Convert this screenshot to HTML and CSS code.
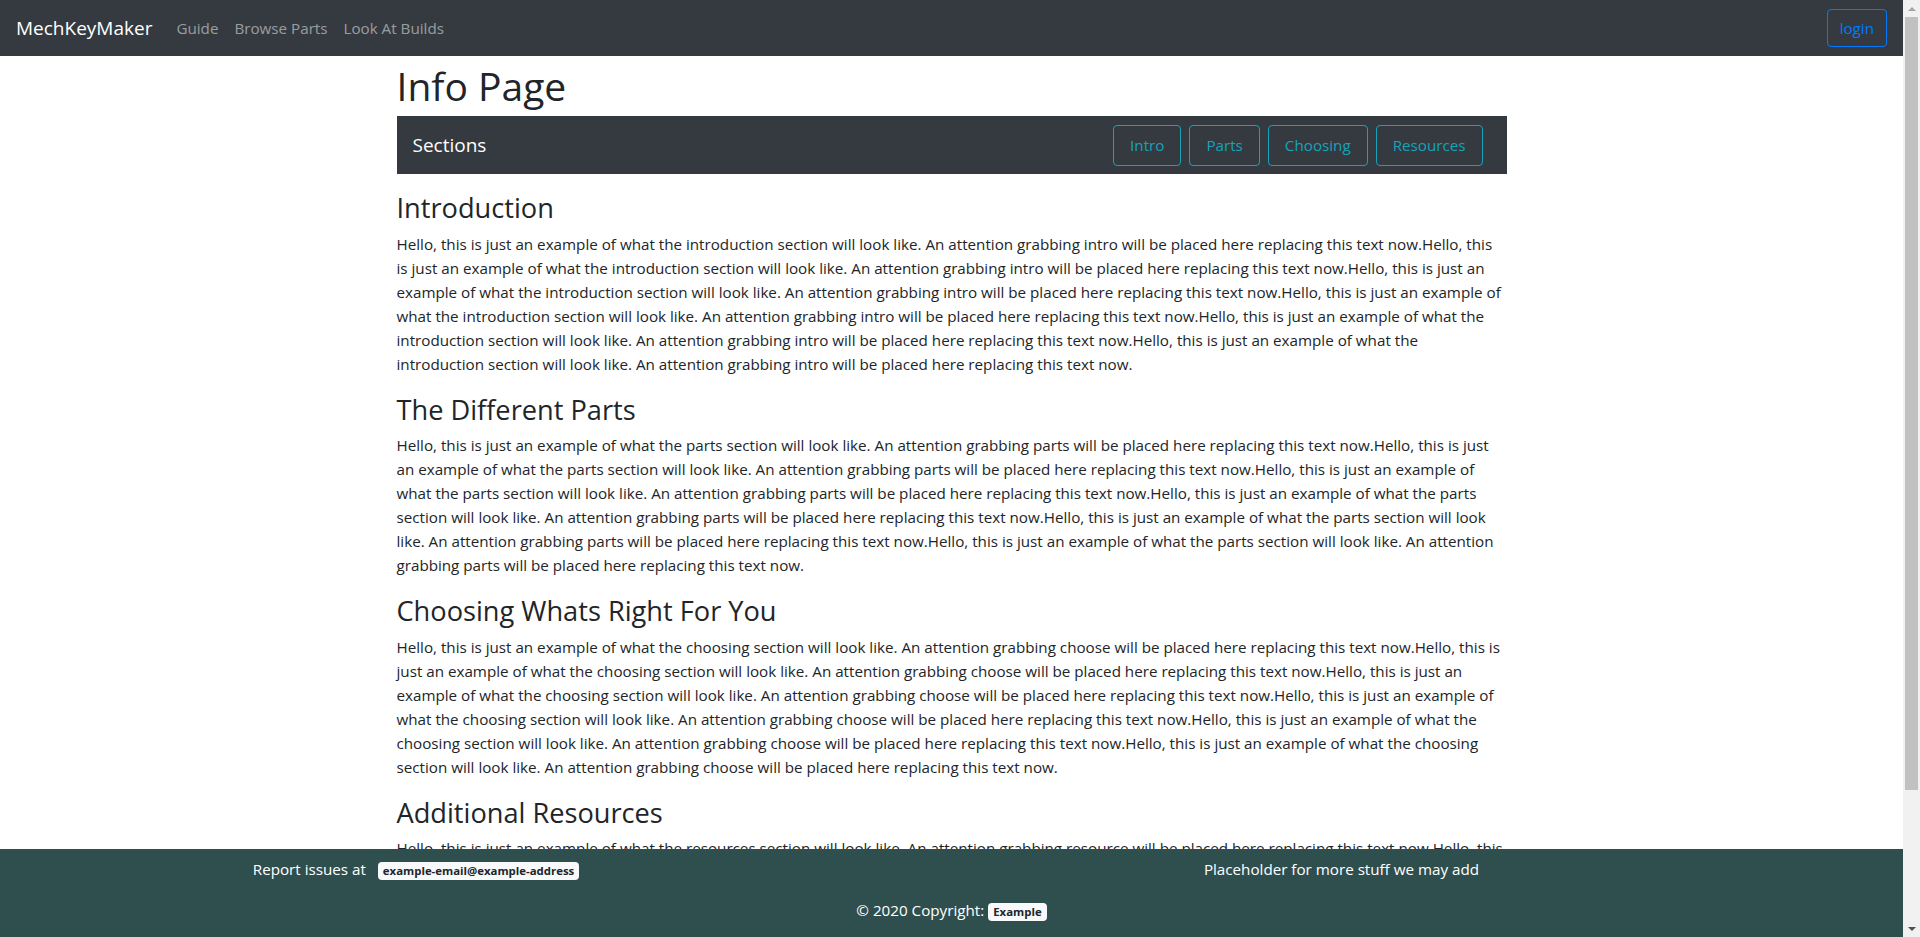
FILE: index.html
```html
<!DOCTYPE html>
<html lang="en">
<head>
<meta charset="utf-8">
<title>Info Page</title>
<link rel="stylesheet" href="styles.css">
</head>
<body>
<nav class="topnav">
  <a class="brand" href="#">MechKeyMaker</a>
  <ul class="navlinks">
    <li><a href="#">Guide</a></li>
    <li><a href="#">Browse Parts</a></li>
    <li><a href="#">Look At Builds</a></li>
  </ul>
  <button class="btn btn-login">login</button>
</nav>

<main class="container">
  <h1 class="page-title">Info Page</h1>
  <div class="sections-bar">
    <span class="sections-title">Sections</span>
    <div class="sections-buttons">
      <a class="btn btn-info" href="#intro">Intro</a>
      <a class="btn btn-info" href="#parts">Parts</a>
      <a class="btn btn-info" href="#choosing">Choosing</a>
      <a class="btn btn-info" href="#resources">Resources</a>
    </div>
  </div>

  <section id="intro" class="info-section">
    <h3>Introduction</h3>
    <p>Hello, this is just an example of what the introduction section will look like. An attention grabbing intro will be placed here replacing this text now.Hello, this is just an example of what the introduction section will look like. An attention grabbing intro will be placed here replacing this text now.Hello, this is just an example of what the introduction section will look like. An attention grabbing intro will be placed here replacing this text now.Hello, this is just an example of what the introduction section will look like. An attention grabbing intro will be placed here replacing this text now.Hello, this is just an example of what the introduction section will look like. An attention grabbing intro will be placed here replacing this text now.Hello, this is just an example of what the introduction section will look like. An attention grabbing intro will be placed here replacing this text now.</p>
  </section>

  <section id="parts" class="info-section">
    <h3>The Different Parts</h3>
    <p>Hello, this is just an example of what the parts section will look like. An attention grabbing parts will be placed here replacing this text now.Hello, this is just an example of what the parts section will look like. An attention grabbing parts will be placed here replacing this text now.Hello, this is just an example of what the parts section will look like. An attention grabbing parts will be placed here replacing this text now.Hello, this is just an example of what the parts section will look like. An attention grabbing parts will be placed here replacing this text now.Hello, this is just an example of what the parts section will look like. An attention grabbing parts will be placed here replacing this text now.Hello, this is just an example of what the parts section will look like. An attention grabbing parts will be placed here replacing this text now.</p>
  </section>

  <section id="choosing" class="info-section">
    <h3>Choosing Whats Right For You</h3>
    <p>Hello, this is just an example of what the choosing section will look like. An attention grabbing choose will be placed here replacing this text now.Hello, this is just an example of what the choosing section will look like. An attention grabbing choose will be placed here replacing this text now.Hello, this is just an example of what the choosing section will look like. An attention grabbing choose will be placed here replacing this text now.Hello, this is just an example of what the choosing section will look like. An attention grabbing choose will be placed here replacing this text now.Hello, this is just an example of what the choosing section will look like. An attention grabbing choose will be placed here replacing this text now.Hello, this is just an example of what the choosing section will look like. An attention grabbing choose will be placed here replacing this text now.</p>
  </section>

  <section id="resources" class="info-section">
    <h3>Additional Resources</h3>
    <p>Hello, this is just an example of what the resources section will look like. An attention grabbing resource will be placed here replacing this text now.Hello, this is just an example of what the resources section will look like. An attention grabbing resource will be placed here replacing this text now.Hello, this is just an example of what the resources section will look like. An attention grabbing resource will be placed here replacing this text now.Hello, this is just an example of what the resources section will look like. An attention grabbing resource will be placed here replacing this text now.Hello, this is just an example of what the resources section will look like. An attention grabbing resource will be placed here replacing this text now.Hello, this is just an example of what the resources section will look like. An attention grabbing resource will be placed here replacing this text now.</p>
  </section>
</main>

<footer class="site-footer">
  <div class="footer-row">
    <p class="footer-item">Report issues at <span class="badge badge-gap">example-email@example-address</span></p>
    <p class="footer-item">Placeholder for more stuff we may add</p>
  </div>
  <p class="copyright">© 2020 Copyright: <span class="badge">Example</span></p>
</footer>

<div class="scrollbar" aria-hidden="true">
  <span class="scroll-arrow scroll-up"></span>
  <span class="scroll-track"><span class="scroll-thumb"></span></span>
  <span class="scroll-arrow scroll-down"></span>
</div>
</body>
</html>
```

FILE: styles.css
```css
* {
  box-sizing: border-box;
}

html, body {
  margin: 0;
  padding: 0;
}

body {
  font-family: "Open Sans", "Noto Sans", sans-serif;
  font-size: 15.2px;
  line-height: 24px;
  color: #212529;
  background: #fff;
  margin-right: 17px;
  padding-bottom: 100px;
}

a {
  text-decoration: none;
}

/* Top navbar */
.topnav {
  display: flex;
  align-items: center;
  height: 56px;
  padding: 8px 16px;
  background: #343a40;
}

.brand {
  font-size: 19px;
  line-height: 30px;
  color: #fff;
  margin-right: 16px;
}

.navlinks {
  display: flex;
  list-style: none;
  margin: 0;
  padding: 0;
  flex: 1;
}

.navlinks a {
  display: block;
  padding: 8px;
  color: rgba(255, 255, 255, 0.5);
}

.btn {
  display: inline-block;
  font-family: inherit;
  font-size: 15.2px;
  border-radius: 4px;
  background: transparent;
  cursor: pointer;
}

.btn-login {
  color: #007bff;
  border: 1px solid #007bff;
  line-height: 24px;
  padding: 6px 12px;
}

/* Main container */
.container {
  width: 1140px;
  margin: 0 auto;
  padding: 0 15px;
}

.page-title {
  font-size: 39px;
  font-weight: 500;
  line-height: 48px;
  margin: 6px 0 6px;
}

.sections-bar {
  display: flex;
  align-items: center;
  justify-content: space-between;
  background: #343a40;
  padding: 8px 24px 8px 16px;
  margin-bottom: 16px;
}

.sections-title {
  color: #fff;
  font-size: 19px;
  line-height: 30px;
}

.sections-buttons {
  display: flex;
  gap: 8px;
}

.btn-info {
  color: #17a2b8;
  border: 1px solid #17a2b8;
  line-height: 25px;
  padding: 7px 16px;
  margin-top: 1px;
}

.info-section h3 {
  font-size: 27.2px;
  font-weight: 500;
  line-height: 33.6px;
  padding-top: 1px;
  margin: 0 0 7px;
}

.info-section p {
  margin: 0 0 16px;
}

/* Footer */
.site-footer {
  position: fixed;
  left: 0;
  right: 17px;
  bottom: 0;
  background: #2f4f4f;
  color: #fff;
  padding: 8px 0 15px;
}

.footer-row {
  display: grid;
  grid-template-columns: 832px 1019px;
  justify-items: center;
  margin-bottom: 17px;
}

.footer-row p,
.copyright {
  margin: 0;
}

.copyright {
  text-align: center;
}

.badge {
  display: inline-block;
  background: #f8f9fa;
  color: #212529;
  font-size: 11.4px;
  font-weight: 700;
  line-height: 12px;
  padding: 3px 5px;
  border-radius: 4px;
  vertical-align: baseline;
}

.badge-gap {
  margin-left: 8px;
}

/* Window scrollbar */
.scrollbar {
  position: fixed;
  top: 0;
  right: 0;
  width: 17px;
  height: 100vh;
  background: #f1f1f1;
  display: flex;
  flex-direction: column;
}

.scroll-arrow {
  flex: 0 0 17px;
  display: flex;
  align-items: center;
  justify-content: center;
}

.scroll-arrow::before {
  content: "";
  width: 0;
  height: 0;
  border-left: 4px solid transparent;
  border-right: 4px solid transparent;
}

.scroll-up::before {
  border-bottom: 4px solid #a3a3a3;
}

.scroll-down::before {
  border-top: 4px solid #505050;
}

.scroll-track {
  flex: 1;
  padding: 0 2px;
}

.scroll-thumb {
  display: block;
  height: 773px;
  background: #c1c1c1;
}
```
